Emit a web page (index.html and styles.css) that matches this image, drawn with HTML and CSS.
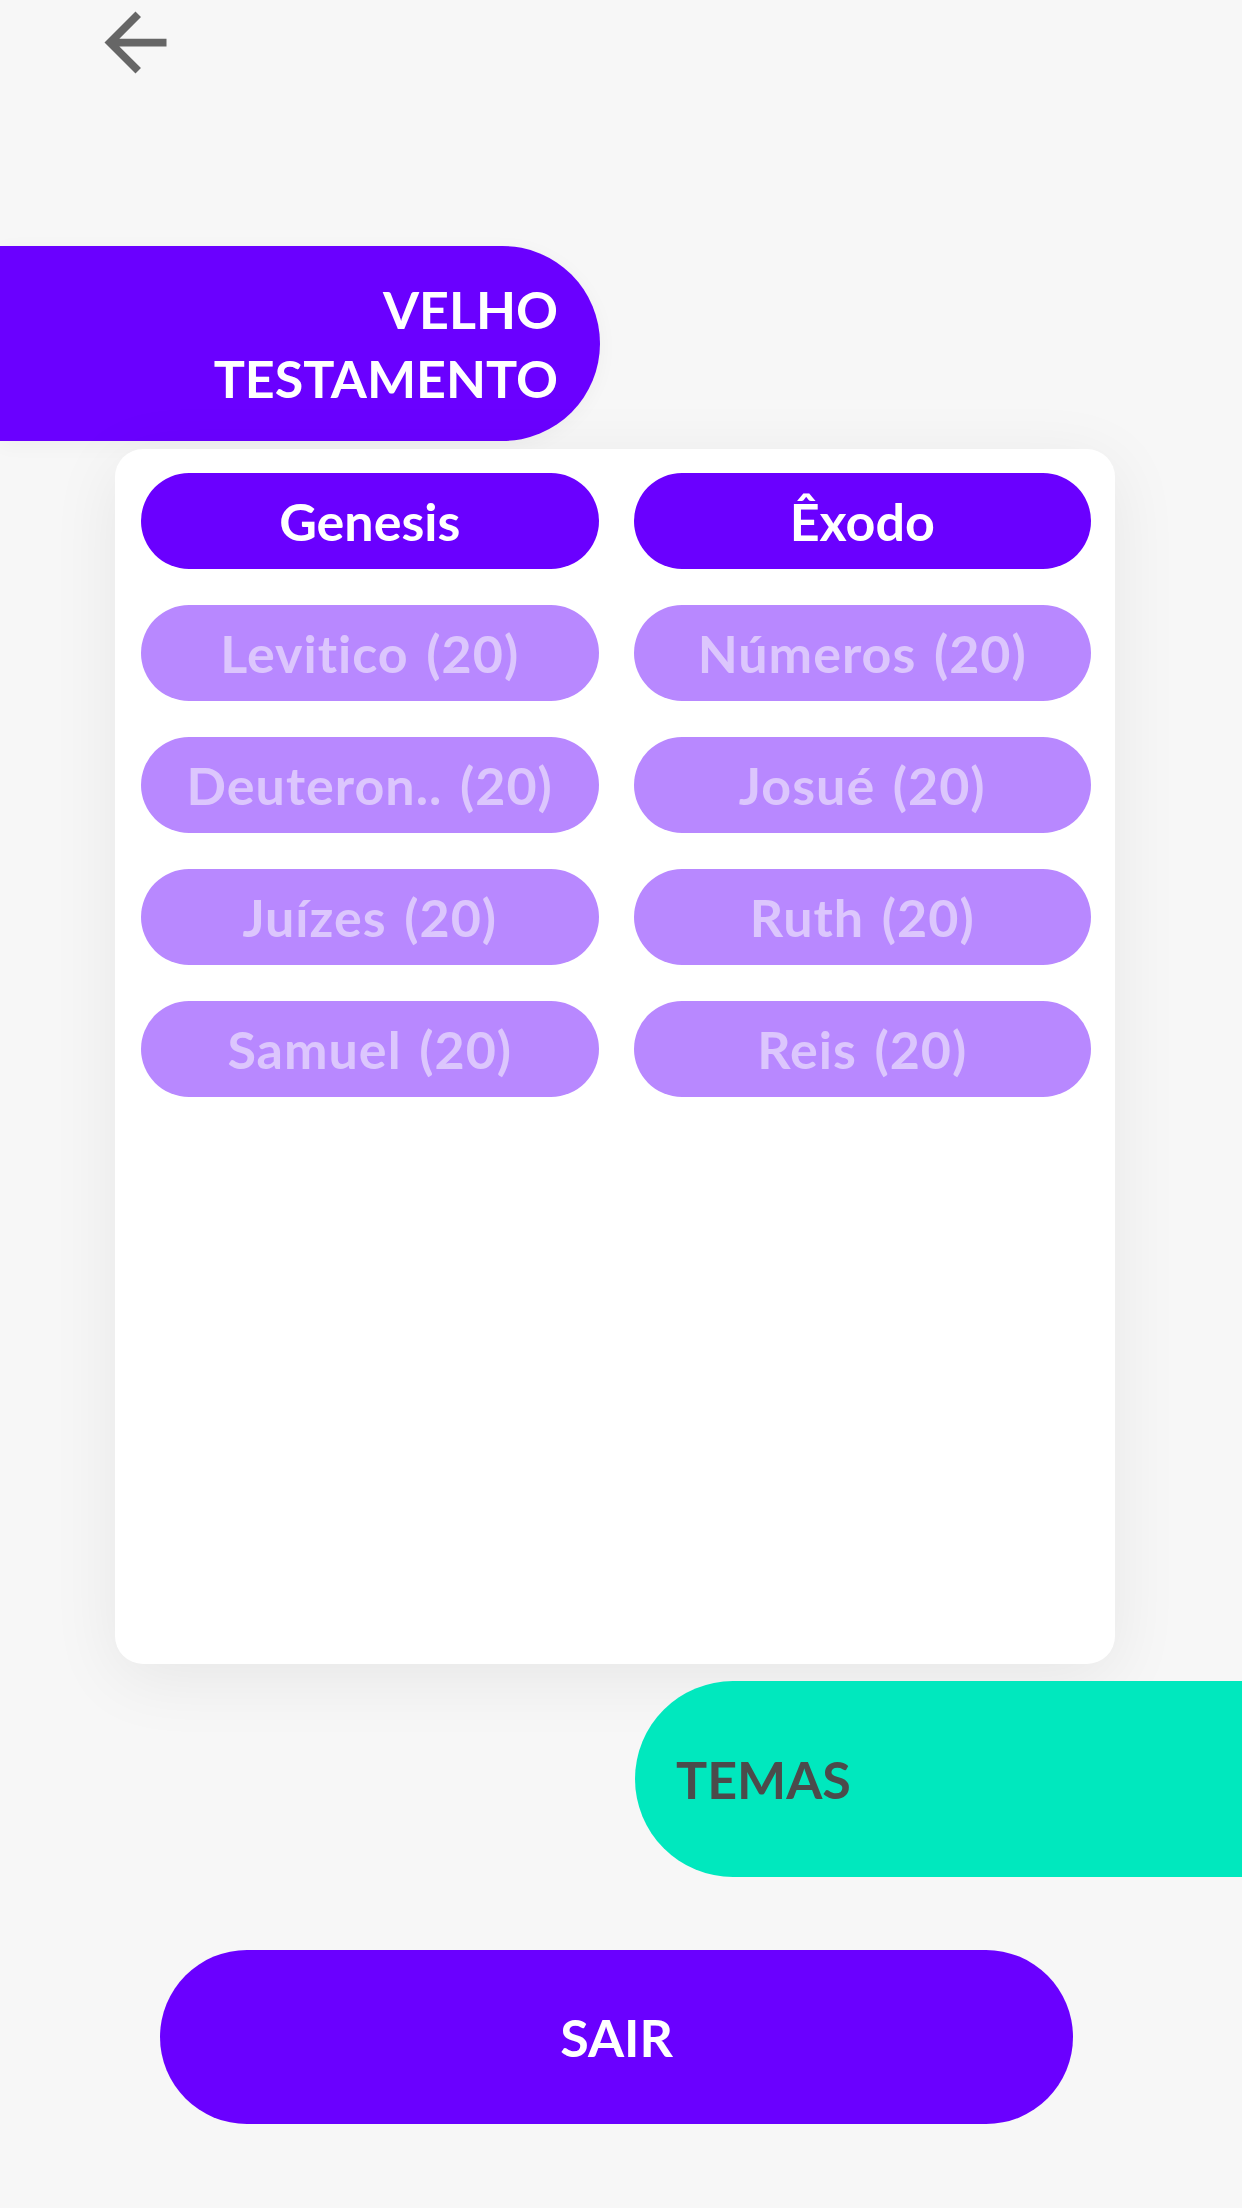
FILE: index.html
```html
<!DOCTYPE html>
<html lang="pt">
<head>
    <meta charset="UTF-8">
    <meta name="viewport" content="width=device-width, initial-scale=1.0">
    <title>Velho Testamento</title>
    <link rel="stylesheet" href="styles.css">
</head>
<body>

    <!-- Top bar -->
    <div class="topbar">
        <svg class="back-icon" viewBox="0 0 24 24" aria-label="Voltar">
            <path d="M20 11H7.83l5.59-5.59L12 4l-8 8 8 8 1.41-1.41L7.83 13H20v-2z"/>
        </svg>
    </div>

    <!-- Section tab -->
    <div class="section-tab">
        <span>VELHO<br>TESTAMENTO</span>
    </div>

    <!-- Books -->
    <div class="books-card">
        <div class="books-grid">
            <button class="book active">Genesis</button>
            <button class="book active">Êxodo</button>
            <button class="book locked">Levitico (20)</button>
            <button class="book locked">Números (20)</button>
            <button class="book locked">Deuteron.. (20)</button>
            <button class="book locked">Josué (20)</button>
            <button class="book locked">Juízes (20)</button>
            <button class="book locked">Ruth (20)</button>
            <button class="book locked">Samuel (20)</button>
            <button class="book locked">Reis (20)</button>
        </div>
    </div>

    <!-- Themes tab -->
    <div class="themes-row">
        <div class="themes-tab">TEMAS</div>
    </div>

    <!-- Exit -->
    <div class="exit-row">
        <button class="exit-btn">SAIR</button>
    </div>

</body>
</html>
```

FILE: styles.css
```css
/* General Reset */
body, button {
    margin: 0;
    padding: 0;
    font-family: Lato, "Noto Sans", sans-serif;
}
body {
    background-color: #f7f7f7;
    width: 1242px;
    height: 2208px;
    overflow: hidden;
}

/* Top bar */
.topbar {
    display: flex;
    height: 90px;
    padding-left: 89px;
}
.back-icon {
    display: block;
    width: 93px;
    height: 93px;
    margin-top: -4px;
    fill: #666666;
}

/* Velho testamento tab */
.section-tab {
    margin-top: 156px;
    width: 600px;
    height: 195px;
    box-sizing: border-box;
    padding-right: 42px;
    background-color: #6a00ff;
    border-radius: 0 98px 98px 0;
    display: flex;
    align-items: center;
    justify-content: flex-end;
    text-align: right;
    color: white;
    font-weight: 700;
    font-size: 52px;
    line-height: 69px;
    box-shadow: 0 4px 20px rgba(0, 0, 0, 0.04);
}

/* Card with books */
.books-card {
    margin: 8px 0 0 115px;
    width: 1000px;
    height: 1215px;
    box-sizing: border-box;
    padding: 24px 24px 24px 26px;
    background-color: white;
    border-radius: 28px;
    box-shadow: 0 14px 70px rgba(0, 0, 0, 0.07);
}
.books-grid {
    display: grid;
    grid-template-columns: 1fr 1fr;
    column-gap: 35px;
    row-gap: 36px;
}
.book {
    height: 96px;
    border: none;
    border-radius: 48px;
    font-size: 52px;
    font-weight: 700;
    cursor: pointer;
}
.book.active {
    background-color: #6a00ff;
    color: white;
}
.book.locked {
    background-color: #b888ff;
    color: #dcc6fd;
    letter-spacing: 1px;
    word-spacing: 4px;
}

/* Temas tab */
.themes-row {
    display: flex;
    justify-content: flex-end;
    margin-top: 17px;
}
.themes-tab {
    width: 607px;
    height: 196px;
    box-sizing: border-box;
    padding-left: 41px;
    background-color: #00e8be;
    border-radius: 98px 0 0 98px;
    display: flex;
    align-items: center;
    color: #4b4b4b;
    font-size: 52px;
    font-weight: 700;
}

/* Sair */
.exit-row {
    margin-top: 73px;
    padding-left: 160px;
}
.exit-btn {
    width: 913px;
    height: 174px;
    border: none;
    border-radius: 87px;
    background-color: #6a00ff;
    color: white;
    font-size: 52px;
    font-weight: 700;
    cursor: pointer;
}
```
